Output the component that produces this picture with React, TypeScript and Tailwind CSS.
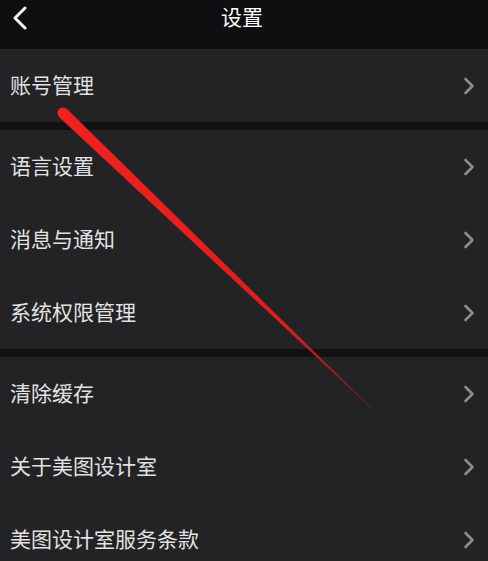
import type { ReactNode } from 'react';

const font = { fontFamily: '"Noto Sans CJK SC", "Noto Sans", sans-serif' };

export default function App() {
  return (
    <div className="relative w-[488px] h-[561px] overflow-hidden bg-[#121214] text-[#e2e2e2]" style={font}>
      {/* header */}
      <div className="relative h-[49px] flex items-center justify-center bg-[#0f0f11]">
        <svg className="absolute left-[11px] top-[6px]" width="18" height="24" viewBox="0 0 18 24" fill="none">
          <path d="M14 2 L4 12 L14 22" stroke="#f2f2f2" strokeWidth="3" strokeLinecap="round" strokeLinejoin="round" />
        </svg>
        <span className="text-[21px] leading-none text-white -mt-[16px] -ml-[4px]">设置</span>
      </div>

      <Section>
        <Row label="账号管理" />
      </Section>
      <div className="h-[8px]" />
      <Section>
        <Row label="语言设置" />
        <Row label="消息与通知" />
        <Row label="系统权限管理" />
      </Section>
      <div className="h-[8px]" />
      <Section>
        <Row label="清除缓存" />
        <Row label="关于美图设计室" />
        <Row label="美图设计室服务条款" />
      </Section>

      {/* red annotation arrow */}
      <svg className="absolute inset-0 pointer-events-none" width="488" height="561" viewBox="0 0 488 561">
        <defs>
          <linearGradient id="arrow" x1="63" y1="113" x2="385" y2="421" gradientUnits="userSpaceOnUse">
            <stop offset="0" stopColor="#f0221f" />
            <stop offset="0.7" stopColor="#e01c1c" />
            <stop offset="1" stopColor="#6a1616" />
          </linearGradient>
        </defs>
        <polygon points="59.3,117.2 66.7,108.8 386,422" fill="url(#arrow)" />
        <circle cx="63" cy="113" r="5.5" fill="#f0221f" />
      </svg>
    </div>
  );
}

function Section({ children }: { children: ReactNode }) {
  return <div className="flex flex-col bg-[#232325]">{children}</div>;
}

function Row({ label }: { label: string }) {
  return (
    <div className="h-[73px] flex items-center justify-between pl-[10px] pr-[13px]">
      <span className="text-[21px] leading-none -mt-[2px]">{label}</span>
      <svg width="12" height="18" viewBox="0 0 12 18" fill="none">
        <path d="M2.5 2 L9.5 9 L2.5 16" stroke="#8c8c8e" strokeWidth="2.6" strokeLinecap="round" strokeLinejoin="round" />
      </svg>
    </div>
  );
}
